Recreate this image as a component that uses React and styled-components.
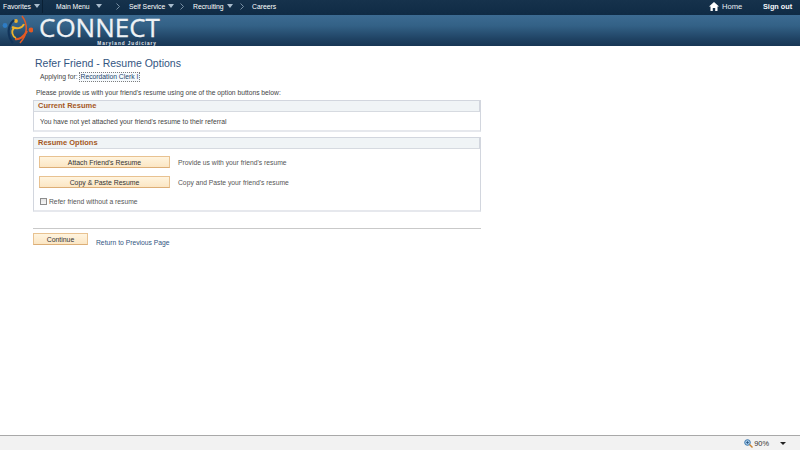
import React from "react";
import styled, { createGlobalStyle } from "styled-components";

const Global = createGlobalStyle`
  html, body { margin: 0; padding: 0; background: #fff; }
  body { font-family: "Liberation Sans", Arial, sans-serif; }
  #root { width: 800px; height: 450px; overflow: hidden; }
`;
const Page = styled.div`
  width: 800px; height: 450px; display: flex; flex-direction: column; background: #fff;
`;
const NavBar = styled.nav`
  height: 15px; flex: none; display: flex; align-items: center; color: #fff; font-size: 6.8px;
  background: linear-gradient(#16324c, #0f2b45); box-sizing: border-box; padding-bottom: 2px;
`;
const NavItem = styled.span`
  width: ${p => p.$w}px; flex: none; display: flex; align-items: center; gap: ${p => p.$gap ?? 3}px;
  padding-left: ${p => p.$pl ?? 0}px; box-sizing: border-box; white-space: nowrap; height: 100%;
  border-right: ${p => p.$divider ? "1px solid #0a2035" : "none"};
`;
const Caret = styled.i`
  display: inline-block; width: 0; height: 0; border-left: 3.5px solid transparent; border-right: 3.5px solid transparent;
  border-top: 4px solid #a9bccd; margin-top: -2px;
`;
const Chevron = styled.svg`
  width: 4px; height: 7px; flex: none; margin-left: ${p => p.$ml}px;
`;
const NavRight = styled.div`
  margin-left: auto; display: flex; align-items: center; height: 100%;
`;
const HomeLink = styled.span`
  display: flex; align-items: center; gap: 3px; width: 54px; font-size: 7.6px; color: #e8eef4;
`;
const SignOut = styled.span`
  width: 37px; font-size: 7.3px; font-weight: bold; color: #f4f7fa;
`;
const Brand = styled.header`
  height: 31px; flex: none; display: flex; align-items: flex-start; background: linear-gradient(#3c6b92 0%, #336186 35%, #1f4263 78%, #183655 100%);
  box-sizing: border-box; padding-left: 2px;
`;
const Logo = styled.svg`
  width: 31px; height: 31px; flex: none;
`;
const BrandText = styled.div`
  display: flex; flex-direction: column; align-items: flex-end; margin-left: 6px; color: #eef2f5;
`;
const BrandName = styled.div`
  font-family: "Open Sans", "Liberation Sans", sans-serif; font-size: 26px; line-height: 23px; height: 23px; margin-top: 1px; -webkit-text-stroke: .3px #eef2f5;
`;
const BrandSub = styled.div`
  font-size: 4.7px; line-height: 5px; font-weight: bold; letter-spacing: .95px; margin-top: 2px; margin-right: 3px; color: #e2e8ee;
`;
const Main = styled.main`
  flex: 1; width: 448px; margin-left: 33px; display: flex; flex-direction: column; color: #333;
`;
const Title = styled.h1`
  margin: 11px 0 0 2px; font-weight: normal; font-size: 10.5px; line-height: 13px; color: #33557f;
`;
const Applying = styled.div`
  display: flex; align-items: center; margin: 2px 0 0 7px; font-size: 6.75px; line-height: 10px; color: #444; gap: 1px;
`;
const Focused = styled.a`
  color: #23456d; border: 1px dotted #7d7d7d; padding: 0 1px; line-height: 8px; background: #f6fafd;
`;
const Intro = styled.p`
  margin: 6px 0 0 3px; font-size: 6.73px; line-height: 9px; color: #444;
`;
const Section = styled.section`
  margin-top: ${p => p.$mt}px; height: ${p => p.$h}px; box-sizing: border-box; display: flex; flex-direction: column;
  border: 1px solid #d2d6de; border-bottom: 2px solid #e6e8ed;
`;
const SectionHead = styled.h2`
  margin: 0; height: 10px; flex: none; padding: 0 0 0 4px; font-size: 7.5px; line-height: 10px; font-weight: bold;
  color: #a5581c; background: #f0f4f6; border-bottom: 1px solid #d6dae0; border-right: 1px solid #d2d6de;
`;
const SectionBody = styled.div`
  flex: 1; display: flex; flex-direction: column; font-size: 6.75px; color: #444;
`;
const NoResume = styled.p`
  margin: 5px 0 0 6px; line-height: 9px;
`;
const OptionRow = styled.div`
  display: flex; align-items: center; gap: 8px; margin: ${p => p.$mt}px 0 0 5px; color: #555;
`;
const OptButton = styled.button`
  width: 131px; height: 12px; padding: 0; box-sizing: border-box; font: 6.9px/9px "Liberation Sans", sans-serif; color: #333;
  background: linear-gradient(#fff4df, #fbe6c4); border: 1px solid #e8c291; border-bottom-color: #dcae77;
`;
const CheckRow = styled.label`
  display: flex; align-items: center; gap: 2px; margin: 9px 0 0 6px; color: #555; line-height: 9px;
`;
const Check = styled.span`
  width: 5px; height: 5px; flex: none; border: 1px solid #8d8d8d; background: linear-gradient(#e4e4e4, #f7f7f7);
`;
const Rule = styled.hr`
  margin: 16px 0 0; border: 0; height: 1px; background: #c9c9c9;
`;
const Actions = styled.div`
  display: flex; align-items: flex-start; gap: 8px; margin-top: 4px;
`;
const ContinueButton = styled(OptButton)`
  width: 55px; height: 12px; flex: none;
`;
const BackLink = styled.a`
  font-size: 6.75px; line-height: 9px; margin-top: 5px; color: #33557f;
`;
const StatusBar = styled.footer`
  height: 15px; flex: none; box-sizing: border-box; display: flex; align-items: center; justify-content: flex-end;
  background: #f2f2f2; border-top: 1px solid #a9a9a9; font-size: 7.4px; color: #333; padding-right: 14px;
`;
const Zoom = styled.span`
  display: flex; align-items: center; gap: 1px; margin-right: 11px;
`;
const ZoomCaret = styled.i`
  width: 0; height: 0; border-left: 3px solid transparent; border-right: 3px solid transparent; border-top: 3px solid #222;
`;

const Arrow = ({ ml }) => (
  <Chevron $ml={ml} viewBox="0 0 4 7"><path d="M.5.5 3.5 3.5.5 6.5" fill="none" stroke="#93a8bb" strokeWidth=".8" /></Chevron>
);

export default function App() {
  return (
    <Page>
      <Global />
      <NavBar>
        <NavItem $w={43} $pl={3} $divider>Favorites <Caret /></NavItem>
        <NavItem $w={73} $pl={13} $gap={6}>Main Menu <Caret /><Arrow ml={8} /></NavItem>
        <NavItem $w={65} $pl={13}>Self Service <Caret /><Arrow ml={3} /></NavItem>
        <NavItem $w={59} $pl={12}>Recruiting <Caret /><Arrow ml={4} /></NavItem>
        <NavItem $w={40} $pl={12}>Careers</NavItem>
        <NavRight>
          <HomeLink>
            <svg width="10" height="9" viewBox="0 0 10 9"><path d="M5 0 0 4.5h1.5V9h2.3V6h2.4v3h2.3V4.5H10z" fill="#fff" /></svg>
            Home
          </HomeLink>
          <SignOut>Sign out</SignOut>
        </NavRight>
      </NavBar>
      <Brand>
        <Logo viewBox="0 0 31 31">
          <circle cx="3" cy="10.5" r="2.4" fill="#2e7cc4" />
          <circle cx="29" cy="15" r="2.4" fill="#e25a24" />
          <circle cx="14" cy="6" r="1.9" fill="#eeb32c" />
          <path d="M12 5C5 11 5 21 11 28" fill="none" stroke="#12345a" strokeWidth="2.2" />
          <path d="M20 1c6 8 6 18-2 27" fill="none" stroke="#e25a24" strokeWidth="1.5" />
          <path d="M10 12c4 2 10 2 12-3" fill="none" stroke="#eeb32c" strokeWidth="2" />
          <path d="M13 24c4 1 9-2 12-8" fill="none" stroke="#e25a24" strokeWidth="2.2" />
          <path d="M14 23c-4-2-5-7-2-10" fill="none" stroke="#eeb32c" strokeWidth="1.8" />
        </Logo>
        <BrandText>
          <BrandName>CONNECT</BrandName>
          <BrandSub>Maryland Judiciary</BrandSub>
        </BrandText>
      </Brand>
      <Main>
        <Title>Refer Friend - Resume Options</Title>
        <Applying>Applying for: <Focused>Recordation Clerk I</Focused></Applying>
        <Intro>Please provide us with your friend's resume using one of the option buttons below:</Intro>
        <Section $mt={3} $h={32}>
          <SectionHead>Current Resume</SectionHead>
          <SectionBody><NoResume>You have not yet attached your friend's resume to their referral</NoResume></SectionBody>
        </Section>
        <Section $mt={5} $h={75}>
          <SectionHead>Resume Options</SectionHead>
          <SectionBody>
            <OptionRow $mt={7}><OptButton>Attach Friend's Resume</OptButton>Provide us with your friend's resume</OptionRow>
            <OptionRow $mt={8}><OptButton>Copy &amp; Paste Resume</OptButton>Copy and Paste your friend's resume</OptionRow>
            <CheckRow><Check />Refer friend without a resume</CheckRow>
          </SectionBody>
        </Section>
        <Rule />
        <Actions>
          <ContinueButton>Continue</ContinueButton>
          <BackLink>Return to Previous Page</BackLink>
        </Actions>
      </Main>
      <StatusBar>
        <Zoom>
          <svg width="9" height="9" viewBox="0 0 9 9"><circle cx="3.5" cy="3.5" r="2.8" fill="#a8cbe8" stroke="#3c78ad" /><path d="M5.5 5.5 8.5 8.5" stroke="#c9822e" strokeWidth="1.4" /><path d="M2 3.5h3M3.5 2v3" stroke="#1e4f80" strokeWidth=".7" /></svg>
          90%
        </Zoom>
        <ZoomCaret />
      </StatusBar>
    </Page>
  );
}
